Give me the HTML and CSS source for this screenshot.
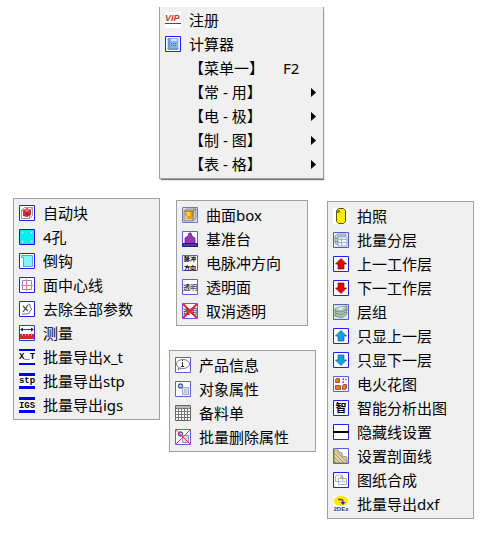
FILE: index.html
```html
<!DOCTYPE html>
<html lang="zh-CN">
<head>
<meta charset="utf-8">
<title>菜单</title>
<link rel="stylesheet" href="styles.css">
</head>
<body>
<main class="page">
  <nav class="menu menu-main">
    <button class="item"><svg class="icon" viewBox="0 0 16 16"><path fill="#fff" d="M0 0h16v16H0z"/><text class="t-vip" x="0" y="9">VIP</text><path fill="#3344cc" d="M0 11h16v1H0z"/></svg>注册</button>
    <button class="item"><svg class="icon" viewBox="0 0 16 16"><path class="frame" d="M.5.5h15v15H.5z"/><path fill="#c5dcf5" d="M2 2h12v12H2z"/><path fill="#6f98cf" d="M3 2h2v12H3zM5 12h8v2H5z"/><path fill="#85b2e6" d="M5 2h8v10H5z"/><path fill="#d5e8fa" d="M6 3h6v2H6z"/><path fill="#3f74b8" d="M6 7h1v1H6zM8 7h1v1H8zM10 7h1v1h-1zM6 9h1v1H6zM8 9h1v1H8zM10 9h1v1h-1z"/></svg>计算器</button>
    <button class="item"><span class="icon"></span>【菜单一】<kbd class="key">F2</kbd></button>
    <button class="item"><span class="icon"></span>【常 - 用】<svg class="arrow" viewBox="0 0 5 9"><path d="M0 0v9l5-4.5z"/></svg></button>
    <button class="item"><span class="icon"></span>【电 - 极】<svg class="arrow" viewBox="0 0 5 9"><path d="M0 0v9l5-4.5z"/></svg></button>
    <button class="item"><span class="icon"></span>【制 - 图】<svg class="arrow" viewBox="0 0 5 9"><path d="M0 0v9l5-4.5z"/></svg></button>
    <button class="item"><span class="icon"></span>【表 - 格】<svg class="arrow" viewBox="0 0 5 9"><path d="M0 0v9l5-4.5z"/></svg></button>
  </nav>

  <div class="submenus">
    <nav class="menu menu-common">
      <button class="item"><svg class="icon" viewBox="0 0 16 16"><path class="frame" d="M.5.5h15v15H.5z"/><path fill="none" stroke="#999" d="M2.500 5.500l3-3h8v8l-3 3h-8zM2.500 5.500h8v8M10.500 5.500l3-3"/><path fill="#cf2c34" d="M4 5l4-2 4 2v5l-4 2-4-1z"/><path fill="#ed7b7b" d="M5 5l3-1 3 1-3 2z"/><path stroke="#941820" d="M8 7v4"/></svg>自动块</button>
      <button class="item"><svg class="icon" viewBox="0 0 16 16"><path fill="#00f0f0" stroke="#1010f0" d="M.5.5h15v15H.5z"/><g fill="#d8e4e8" stroke="#7ab" stroke-width=".5"><circle cx="3.500" cy="3.500" r="1.200"/><circle cx="12.500" cy="3.500" r="1.200"/><circle cx="3.500" cy="12.500" r="1.200"/><circle cx="12.500" cy="12.500" r="1.200"/></g></svg>4孔</button>
      <button class="item"><svg class="icon" viewBox="0 0 16 16"><path class="frame" d="M.5.5h15v15H.5z"/><path fill="#80f4ff" stroke="#5aa0e0" d="M2.500 2.500h11v11h-9v-9h-2z"/></svg>倒钩</button>
      <button class="item"><svg class="icon" viewBox="0 0 16 16"><path class="frame" d="M.5.5h15v15H.5z"/><path fill="none" stroke="#8d8db8" d="M3.500 3.500h9v9h-9z"/><path stroke="#f47c7c" d="M7.500 2v12M2 8.500h12"/></svg>面中心线</button>
      <button class="item"><svg class="icon" viewBox="0 0 16 16"><path class="frame" d="M.5.5h15v15H.5z"/><path fill="none" stroke="#444" stroke-width="1.200" d="M4 5l5 5M9 4l-5 7"/><path fill="none" stroke="#777" d="M9 3q3 0 2 2v1l2 2-2 2q0 3-3 3H3"/></svg>去除全部参数</button>
      <button class="item"><svg class="icon" viewBox="0 0 16 16"><path fill="#fff" stroke="#3038c8" d="M.5.5h15v15H.5z"/><path stroke="#445" d="M2 4.500h12"/><path fill="#224" d="M1 4.500l3-2v4zM15 4.500l-3-2v4z"/><path fill="#d02828" d="M1 9h14v5H1z"/><path stroke="#f5b0b0" stroke-width=".7" d="M3.500 9v2M6.500 9v2M9.500 9v2M12.500 9v2"/></svg>测量</button>
      <button class="item"><svg class="icon" viewBox="0 0 16 16"><path fill="#fff" d="M0 0h16v16H0z"/><path class="bars" d="M0 0h16v2H0zM0 14h16v2H0z"/><text class="t-code" x="8" y="10">X_T</text></svg>批量导出x_t</button>
      <button class="item"><svg class="icon" viewBox="0 0 16 16"><path fill="#fff" d="M0 0h16v16H0z"/><path class="bars" d="M0 0h16v3H0zM0 13h16v3H0z"/><text class="t-code" x="8" y="10">stp</text></svg>批量导出stp</button>
      <button class="item"><svg class="icon" viewBox="0 0 16 16"><path fill="#fff" d="M0 0h16v16H0z"/><path class="bars" d="M0 0h16v3H0zM0 13h16v3H0z"/><text class="t-code" x="8" y="11">IGS</text></svg>批量导出igs</button>
    </nav>

    <div class="stack">
      <nav class="menu menu-electrode">
        <button class="item"><svg class="icon" viewBox="0 0 16 16"><path fill="#d9dce0" stroke="#7078b8" d="M.5.5h15v15H.5z"/><path fill="#c4c6c8" stroke="#777" stroke-width=".7" d="M2 4l3-2h9v9l-3 3H2z"/><path fill="#ff9800" d="M3 4l9 0-2 8-4 0-1-3-2-1z"/><path fill="#ffd45a" d="M4 5l4 0v4l-2 0z"/><path fill="none" stroke="#555" stroke-width=".7" d="M2 4h9v10M11 4l3-2"/></svg>曲面box</button>
        <button class="item"><svg class="icon" viewBox="0 0 16 16"><path class="frame-soft" d="M.5.5h15v15H.5z"/><path fill="#9d32bd" stroke="#42206f" stroke-width=".7" d="M3 13V7l3-2 1-3h2l1 3 3 2v6z"/><path fill="#65308f" stroke="#202080" d="M.5 12.500h15v3H.5z"/></svg>基准台</button>
        <button class="item"><svg class="icon" viewBox="0 0 16 16"><path class="frame-soft" d="M.5.5h15v15H.5z"/><text class="t-small" x="8" y="6">脉冲</text><text class="t-small" x="8" y="15">方向</text></svg>电脉冲方向</button>
        <button class="item"><svg class="icon" viewBox="0 0 16 16"><path class="frame-soft" d="M.5.5h15v15H.5z"/><text class="t-clear" x="8" y="11">透明</text></svg>透明面</button>
        <button class="item"><svg class="icon" viewBox="0 0 16 16"><path class="frame-soft" d="M.5.5h15v15H.5z"/><text class="t-clear" x="8" y="11">透明</text><path stroke="#e8202c" stroke-width="2" d="M1 1l14 14M15 1L1 15"/></svg>取消透明</button>
      </nav>

      <nav class="menu">
        <button class="item"><svg class="icon" viewBox="0 0 16 16"><path class="frame-soft" d="M.5.5h15v15H.5z"/><ellipse cx="8" cy="7" rx="6.500" ry="4.500" fill="#fff" stroke="#555" stroke-width=".8"/><path fill="#fff" stroke="#555" stroke-width=".8" d="M4 10.500l-1 2 3-1"/><path fill="#333" d="M7 3h1v1H7zM7 5h1v4h1v1H6V9h1z"/></svg>产品信息</button>
        <button class="item"><svg class="icon" viewBox="0 0 16 16"><path class="frame-soft" d="M.5.5h15v15H.5z"/><circle cx="5.500" cy="5" r="2" fill="#d8e0f4" stroke="#4558a0" stroke-width="1.300"/><path fill="#dde6f7" stroke="#96a3cc" d="M7.500 6.500h6v7h-6z"/><path stroke="#7185bc" stroke-width=".7" d="M9 9h3M9 11h3"/></svg>对象属性</button>
        <button class="item"><svg class="icon" viewBox="0 0 16 16"><path fill="#fff" stroke="#666" d="M.5.5h15v15H.5z"/><path fill="#b8b8b8" d="M1 1h14v2H1z"/><path stroke="#777" d="M1 3.500h14M1 6.500h14M1 9.500h14M1 12.500h14M3.500 3v12M6.500 3v12M9.500 3v12M12.500 3v12"/></svg>备料单</button>
        <button class="item"><svg class="icon" viewBox="0 0 16 16"><path class="frame-soft" d="M.5.5h15v15H.5z"/><circle cx="5.500" cy="5" r="2" fill="#d8e0f4" stroke="#4558a0" stroke-width="1.300"/><path fill="#cddcf5" stroke="#8795c0" d="M7.500 6.500h6v7h-6z"/><path stroke="#f03c4a" d="M1 1l14 14M15 1L1 15"/></svg>批量删除属性</button>
      </nav>
    </div>

    <nav class="menu menu-drawing">
      <button class="item"><svg class="icon" viewBox="0 0 16 16"><path fill="#fff" d="M0 0h16v16H0z"/><path fill="#ffec00" stroke="#5c5600" d="M3.500 2.500l2-2h5l2 2v11l-2 2h-5l-2-2z"/><circle cx="5.500" cy="3.500" r="1.300" fill="#5b9b78" stroke="#555" stroke-width=".5"/></svg>拍照</button>
      <button class="item"><svg class="icon" viewBox="0 0 16 16"><path fill="#eef4fb" stroke="#5058d8" d="M.5.5h15v15H.5z"/><path fill="#c9d6e6" stroke="#6c8297" stroke-width=".7" d="M2 4l3-2h8v2H5v9l-3-2z"/><path fill="#f4f8fc" stroke="#7d90a6" stroke-width=".7" d="M5 5h9v9H5z"/><path stroke="#a3b4c8" d="M5 7.500h9M5 10.500h9M8.500 5v9"/><path stroke="#76899a" d="M2 6.500h3M2 9.500h3"/></svg>批量分层</button>
      <button class="item"><svg class="icon" viewBox="0 0 16 16"><path class="frame" d="M.5.5h15v15H.5z"/><path fill="#f00000" stroke="#4a2020" stroke-width=".7" d="M8 2.500L13.500 8H11v5H5V8H2.500z"/></svg>上一工作层</button>
      <button class="item"><svg class="icon" viewBox="0 0 16 16"><path class="frame" d="M.5.5h15v15H.5z"/><path fill="#f00000" stroke="#4a2020" stroke-width=".7" d="M8 13.500L13.500 8H11V3H5v5H2.500z"/></svg>下一工作层</button>
      <button class="item"><svg class="icon" viewBox="0 0 16 16"><path fill="#dce4ee" stroke="#5660c0" d="M.5.5h15v15H.5z"/><g fill="#a9c3b2" stroke="#657d70" stroke-width=".7"><path d="M2 10l5-2 7 0v2l-5 4-7-2z"/><path d="M2 7l5-2 7 0v2l-5 4-7-2z"/><path d="M2 5l5-2 7-1v3L9 8 2 7z"/></g><path fill="#e4efe8" d="M3 5l5-2 4 0-4 3z"/></svg>层组</button>
      <button class="item"><svg class="icon" viewBox="0 0 16 16"><path class="frame" d="M.5.5h15v15H.5z"/><path fill="#00a5e8" stroke="#285478" stroke-width=".7" d="M8 2.500L13.500 8H11v5H5V8H2.500z"/></svg>只显上一层</button>
      <button class="item"><svg class="icon" viewBox="0 0 16 16"><path class="frame" d="M.5.5h15v15H.5z"/><path fill="#00a5e8" stroke="#285478" stroke-width=".7" d="M8 13.500L13.500 8H11V3H5v5H2.500z"/></svg>只显下一层</button>
      <button class="item"><svg class="icon" viewBox="0 0 16 16"><path class="frame-soft" d="M.5.5h15v15H.5z"/><path fill="#e77637" stroke="#733519" stroke-width=".7" d="M2.500 3.500l1-1h3v4h-4zM2.500 9.500h5v4h-5zM9.500 9.500l1-1h3v4l-1 1h-3z"/><path fill="none" stroke="#b650bb" stroke-dasharray="2 1" d="M9 3.500h5M9 6.500h3M10.500 2v4"/></svg>电火花图</button>
      <button class="item"><svg class="icon" viewBox="0 0 16 16"><path class="frame" d="M.5.5h15v15H.5z"/><text class="t-smart" x="8" y="12">智</text></svg>智能分析出图</button>
      <button class="item"><svg class="icon" viewBox="0 0 16 16"><path class="frame" d="M.5.5h15v15H.5z"/><path d="M0 7h16v2H0z"/></svg>隐藏线设置</button>
      <button class="item"><svg class="icon" viewBox="0 0 16 16"><path class="frame-soft" d="M.5.5h15v15H.5z"/><path fill="#dfd29c" stroke="#756e55" stroke-width=".7" d="M1 2h4q0 3 4 3v3l5 1v6H1z"/><path fill="none" stroke="#8d835d" stroke-width=".7" d="M1 5l10 10M1 9l6 6M1 13l2 2M4 4l11 11"/></svg>设置剖面线</button>
      <button class="item"><svg class="icon" viewBox="0 0 16 16"><path class="frame" d="M.5.5h15v15H.5z"/><path fill="#f7f8fb" stroke="#a0a6b8" stroke-width=".8" d="M2.500 9.500V4l2-1h5v6.500zM5.500 6.500h8v6h-8z"/><path fill="none" stroke="#d8756f" d="M7 5.500l2-1 2 2"/><path stroke="#c3cadd" d="M7 9.500h5"/></svg>图纸合成</button>
      <button class="item"><svg class="icon" viewBox="0 0 16 16"><path fill="#fff" d="M0 0h16v16H0z"/><ellipse cx="8" cy="5" rx="7.500" ry="5" fill="#ffeb00"/><path fill="none" stroke="#7b328e" stroke-width="1.500" d="M5 3.500h3q2 0 2 3"/><path fill="#452594" d="M7.500 6h5L10 9z"/><text class="t-dxf" x="8" y="15">2DEx</text></svg>批量导出dxf</button>
    </nav>
  </div>
</main>
</body>
</html>
```

FILE: styles.css
```css
* {
  box-sizing: border-box;
}

body {
  margin: 0;
  background: #fff;
  color: #000;
  font-family: "Noto Sans", "Noto Sans CJK SC", sans-serif;
}

.page {
  display: flex;
  flex-direction: column;
  gap: 19px;
  padding: 7px 14px 15px 13px;
}

.menu {
  display: flex;
  flex-direction: column;
  padding: 2px 0;
  border: 1px solid #a0a0a0;
  background: #f0f0f0;
}

.menu-main {
  align-self: center;
  width: 165px;
  margin-right: 4px;
  padding-top: 1px;
  border-top: 0;
  box-shadow: 1px 2px 1px -1px #777;
}

.submenus {
  display: grid;
  grid-template-columns: 1fr 149px 1fr;
  gap: 9px;
  align-items: start;
}

.stack {
  display: flex;
  flex-direction: column;
  gap: 24px;
  padding: 2px 2px 0 0;
}

.menu-electrode {
  margin: 0 8px 0 7px;
}

.menu-drawing {
  margin-top: 3px;
}

.item {
  display: flex;
  align-items: center;
  height: 24px;
  padding: 0 7px 0 5px;
  border: 0;
  background: none;
  color: inherit;
  font: inherit;
  font-size: 15px;
  line-height: 24px;
  text-align: left;
  white-space: pre;
}

.item:hover {
  background: #dcebf8;
}

.icon {
  flex: none;
  width: 16px;
  height: 16px;
  margin-right: 8px;
}

.key {
  margin-left: 19px;
  font: inherit;
}

.arrow {
  width: 5px;
  height: 9px;
  margin-left: auto;
}

.frame {
  fill: #fff;
  stroke: #2020f0;
}

.frame-soft {
  fill: #fff;
  stroke: #5860d8;
}

.bars {
  fill: #0000f0;
}

.icon text {
  text-anchor: middle;
}

.icon .t-vip {
  fill: #e82828;
  font: italic bold 9px "Liberation Sans", sans-serif;
  text-anchor: start;
}

.t-code {
  font: bold 9px "Liberation Mono", monospace;
}

.t-small {
  font: bold 6px "Noto Sans CJK SC", sans-serif;
}

.t-clear {
  font: 7px "Noto Sans CJK SC", sans-serif;
}

.t-smart {
  font: bold 11px "Noto Sans CJK SC", sans-serif;
}

.t-dxf {
  fill: #303078;
  font: bold 6px "Liberation Sans", sans-serif;
}
```
